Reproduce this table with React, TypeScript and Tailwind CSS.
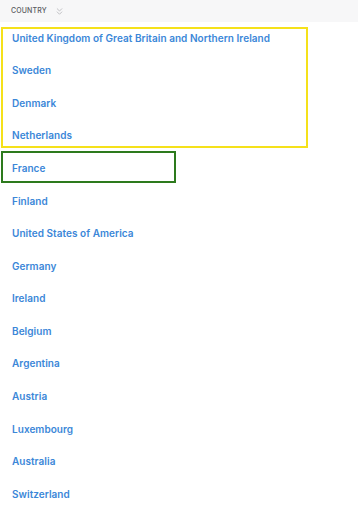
import { ChevronsDown } from 'lucide-react'

const countries = [
  'United Kingdom of Great Britain and Northern Ireland',
  'Sweden',
  'Denmark',
  'Netherlands',
  'France',
  'Finland',
  'United States of America',
  'Germany',
  'Ireland',
  'Belgium',
  'Argentina',
  'Austria',
  'Luxembourg',
  'Australia',
  'Switzerland',
]

const App = () => {
  return (
    <div className="relative w-[358px] h-[512px] overflow-hidden bg-white font-[Inter,sans-serif]">
      <div className="h-[22px] bg-[#f7f7f8] flex items-center pl-[11px] gap-[7px]">
        <span className="text-[7px] font-medium tracking-[0.02em] text-[#5b5b5f]">COUNTRY</span>
        <ChevronsDown className="w-[11px] h-[11px] text-[#a9a9ae]" strokeWidth={1.5} />
      </div>

      <ul>
        {countries.map((name) => (
          <li key={name} className="h-[32.57px] flex items-center pl-[12px]">
            <span className="text-[10px] font-semibold tracking-[0.005em] text-[#3b87d8]">{name}</span>
          </li>
        ))}
      </ul>

      {/* selection outlines */}
      <div className="absolute left-[1px] top-[27px] w-[307px] h-[121px] border-2 border-[#f5e11a]" />
      <div className="absolute left-[1px] top-[151px] w-[175px] h-[32px] border-2 border-[#2d7a1d]" />
    </div>
  )
}

export default App
